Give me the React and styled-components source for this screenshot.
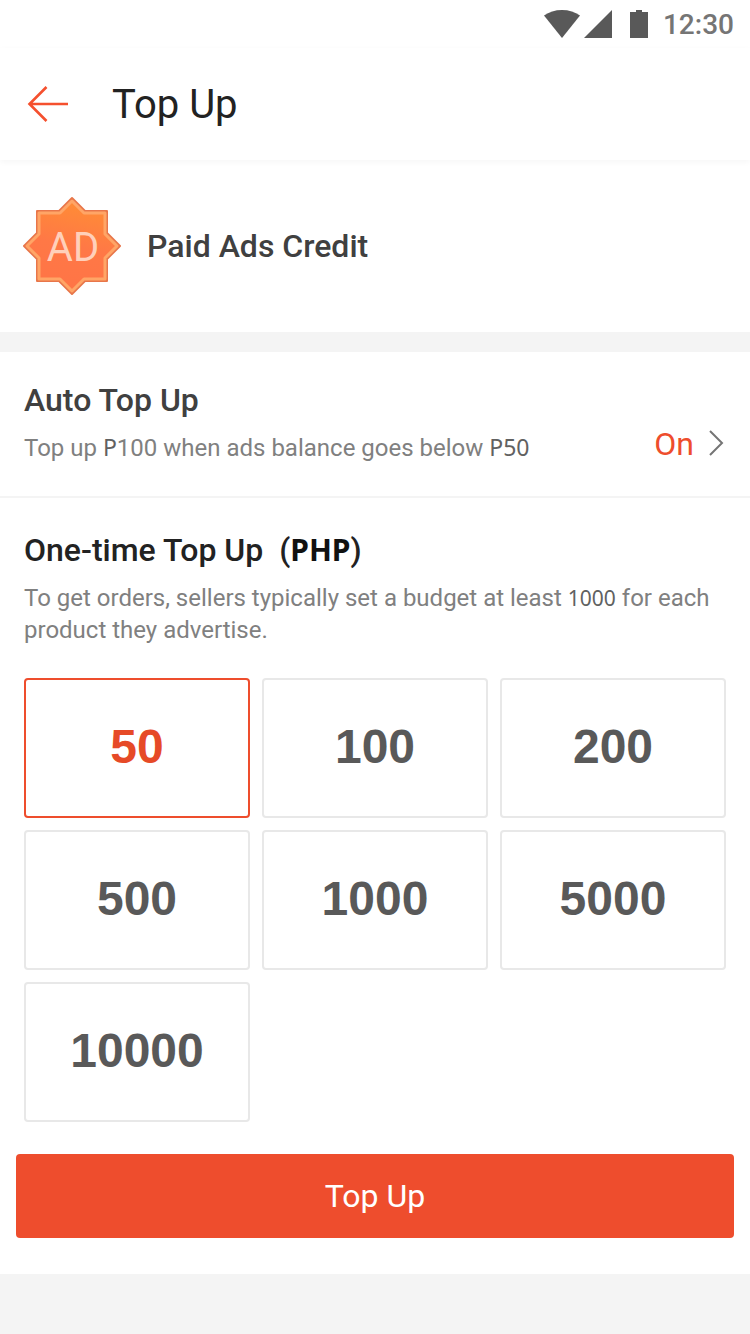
import React, { useState } from 'react'
import styled, { createGlobalStyle } from 'styled-components'

const AMOUNTS = [50, 100, 200, 500, 1000, 5000, 10000]

export default () => {
  const [selected, setSelected] = useState(50)

  return (
    <>
      <GlobalStyle />
      <StatusBar />
      <Header>
        <BackButton type='button' aria-label='Back'>
          <BackArrow />
        </BackButton>
        <Title>Top Up</Title>
      </Header>
      <main>
        <Credit>
          <AdBadge />
          <Heading>Paid Ads Credit</Heading>
        </Credit>
        <AutoTopUp href='#auto'>
          <div>
            <Heading>Auto Top Up</Heading>
            <Hint>
              Top up <Figure>P</Figure>100 when ads balance goes below <Figure>P50</Figure>
            </Hint>
          </div>
          <State>
            On
            <Chevron />
          </State>
        </AutoTopUp>
        <OneTime>
          <Heading $dark>
            One-time Top Up&nbsp; (<Currency>PHP</Currency>)
          </Heading>
          <Hint>
            To get orders, sellers typically set a budget at least <Figure $small>1000</Figure> for each product they advertise.
          </Hint>
          <Amounts>
            {AMOUNTS.map(amount => (
              <Amount
                key={`amount ${amount}`}
                type='button'
                $active={amount === selected}
                aria-pressed={amount === selected}
                onClick={() => setSelected(amount)}
              >
                {amount}
              </Amount>
            ))}
          </Amounts>
        </OneTime>
        <Actions>
          <Submit type='button'>Top Up</Submit>
        </Actions>
      </main>
    </>
  )
}

const StatusBar = () => (
  <Status>
    <svg width='36' height='28' viewBox='0 0 36 28' fill='#595959'>
      <path d='M18 28 0 5.500C5 2 11 0 18 0s13 2 18 5.500Z' />
    </svg>
    <svg width='28' height='28' viewBox='0 0 28 28' fill='#595959'>
      <path d='M28 0v28H0Z' />
    </svg>
    <Battery width='18' height='28' viewBox='0 0 18 28' fill='#595959'>
      <path d='M6 0h6v2h6v26H0V2h6Z' />
    </Battery>
    <time>12:30</time>
  </Status>
)

const BackArrow = () => (
  <svg width='44' height='40' viewBox='0 0 44 40' fill='none' stroke='#f5502e' strokeWidth='2.600'>
    <path d='M22.500 3 5.500 20l17 17M5.500 20H45' />
  </svg>
)

const Chevron = () => (
  <svg width='18' height='28' viewBox='0 0 18 28' fill='none' stroke='#757575' strokeWidth='2'>
    <path d='m2 1 12 12L2 25' />
  </svg>
)

const AdBadge = () => (
  <svg width='96' height='96' viewBox='1 1 96 96' overflow='visible'>
    <defs>
      <linearGradient id='badge-fill' x1='0.6' y1='0' x2='0.4' y2='1'>
        <stop offset='0' stopColor='#ff8d35' />
        <stop offset='0.5' stopColor='#ff7846' />
        <stop offset='1' stopColor='#ff7446' />
      </linearGradient>
    </defs>
    <g strokeLinejoin='round'>
      <path d='M49 1 62 14H84V36L97 49 84 62V84H62L49 97 36 84H14V62L1 49 14 36V14H36Z' fill='#e8764a' stroke='#e8764a' strokeWidth='2' />
      <path d='M49 4 61 16H82V37L94 49 82 61V82H61L49 94 37 82H16V61L4 49 16 37V16H37Z' fill='url(#badge-fill)' stroke='#ffa566' strokeWidth='3' />
    </g>
    <text x='50' y='64' textAnchor='middle' fontFamily='Roboto, sans-serif' fontSize='40' fill='#ffd0ba'>AD</text>
  </svg>
)

const GlobalStyle = createGlobalStyle`
  * {
    box-sizing: border-box;
  }
  body {
    margin: 0;
    background: #f4f4f4;
    color: #404040;
    font-family: Roboto, sans-serif;
  }
  h1, h2, p {
    margin: 0;
  }
  button {
    border: 0;
    padding: 0;
    font-family: inherit;
    cursor: pointer;
  }
  svg {
    display: block;
    flex: none;
  }
`

const Status = styled.div`
  display: flex;
  align-items: center;
  justify-content: flex-end;
  gap: 4px;
  height: 48px;
  padding-right: 16px;
  background: #fff;
  color: #757575;
  font-size: 28px;
  font-weight: 500;
`

const Battery = styled.svg`
  margin: 0 11px 0 14px;
`

const Header = styled.header`
  display: flex;
  align-items: center;
  gap: 44px;
  height: 112px;
  padding: 0 24px;
  background: #fff;
  position: relative;
  box-shadow: 0 2px 6px rgba(0, 0, 0, 0.04);
`

const BackButton = styled.button`
  background: none;
`

const Title = styled.h1`
  padding-top: 2px;
  color: #222;
  font-size: 40px;
  font-weight: 400;
  line-height: 48px;
`

const Heading = styled.h2`
  color: ${({ $dark }) => $dark ? '#222' : '#404040'};
  font-size: 32px;
  font-weight: 500;
  line-height: 40px;
`

const Hint = styled.p`
  margin-top: 12px;
  color: #808080;
  font-size: 24px;
  line-height: 32px;
`

const Figure = styled.span`
  color: #616161;
  font-family: 'Noto Sans', sans-serif;
  font-size: ${({ $small }) => $small ? 21 : 23}px;
  line-height: 1;
`

const Currency = styled.span`
  color: #111;
  font-family: 'Noto Sans', sans-serif;
  font-size: 30px;
  font-weight: 700;
  line-height: 1;
`

const Credit = styled.section`
  display: flex;
  align-items: center;
  gap: 27px;
  padding: 38px 24px;
  background: #fff;
`

const AutoTopUp = styled.a`
  display: flex;
  align-items: flex-end;
  justify-content: space-between;
  margin-top: 20px;
  padding: 28px 24px 32px;
  background: #fff;
  border-bottom: 2px solid #f4f4f4;
  text-decoration: none;
`

const State = styled.span`
  display: flex;
  align-items: center;
  gap: 14px;
  color: #ee4d2d;
  font-size: 32px;
  line-height: 40px;
`

const OneTime = styled.section`
  padding: 32px 24px 0;
  background: #fff;
`

const Amounts = styled.div`
  display: grid;
  grid-template-columns: repeat(3, 1fr);
  gap: 12px;
  margin-top: 32px;
`

const Amount = styled.button`
  height: 140px;
  padding-bottom: 4px;
  border: 2px solid ${({ $active }) => $active ? '#ee4d2d' : '#e8e8e8'};
  border-radius: 4px;
  background: #fff;
  color: ${({ $active }) => $active ? '#e64a27' : '#595959'};
  font-family: 'Liberation Sans', sans-serif;
  font-size: 48px;
  font-weight: 700;
`

const Actions = styled.div`
  padding: 32px 16px 36px;
  background: #fff;
`

const Submit = styled.button`
  display: block;
  width: 100%;
  height: 84px;
  border-radius: 4px;
  background: #ee4d2d;
  color: #fff;
  font-size: 32px;
`
